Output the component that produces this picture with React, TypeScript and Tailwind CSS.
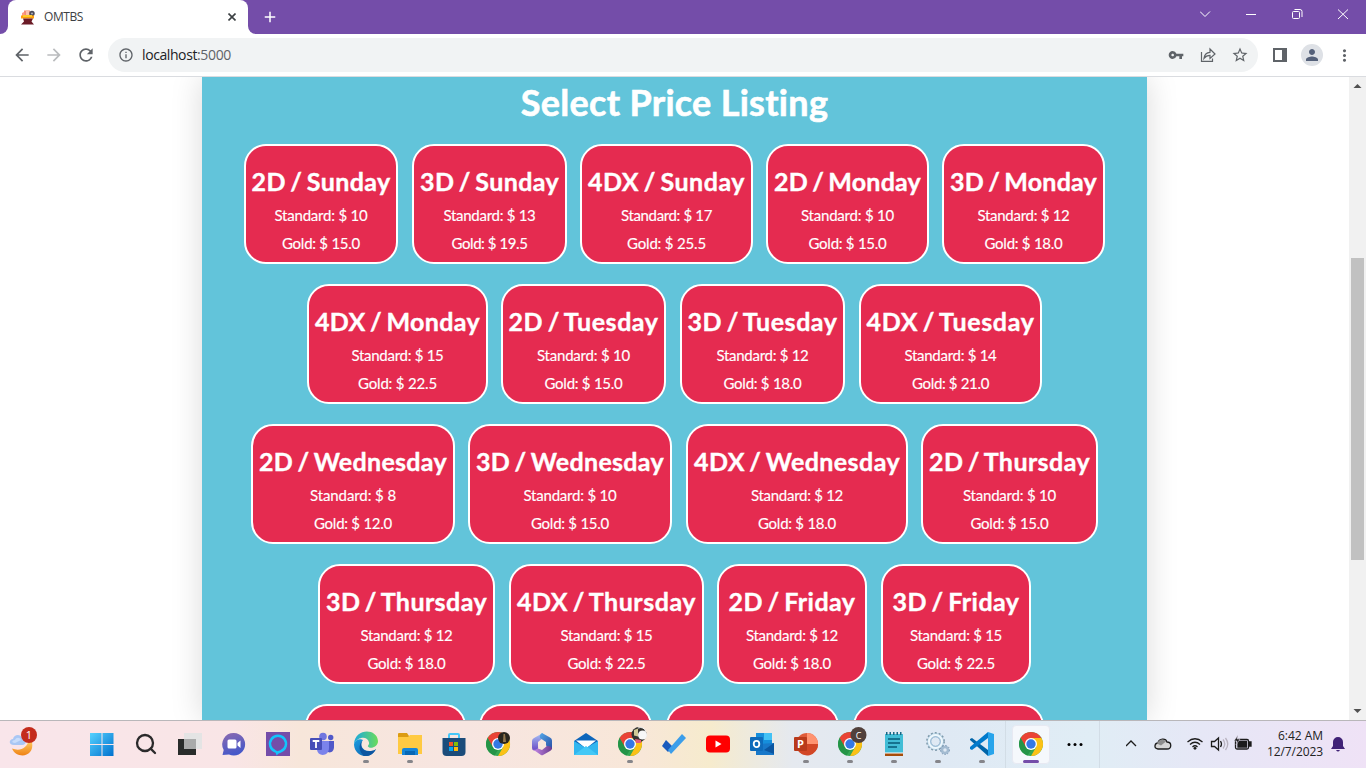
import { useLayoutEffect, useRef, type ReactNode } from "react";
import { Search } from "lucide-react";
import { MdArrowBack, MdArrowForward, MdRefresh, MdInfoOutline, MdVpnKey, MdStarBorder, MdPerson, MdMoreVert, MdAdd } from "react-icons/md";

/** Single line of text, tracked so that it fills exactly `width` pixels. */
function Fit({ children, width, className = "" }: { children: string; width: number; className?: string }) {
  const ref = useRef<HTMLSpanElement>(null);
  useLayoutEffect(() => {
    const el = ref.current!;
    const fit = () => {
      el.style.letterSpacing = "0px";
      const natural = el.getBoundingClientRect().width;
      el.style.letterSpacing = `${(width - natural) / children.length}px`;
    };
    fit();
    document.fonts?.ready.then(fit);
  }, [children, width]);
  return <span ref={ref} className={`inline-block whitespace-nowrap ${className}`}>{children}</span>;
}

type Card = { box: string; title: string; tw: number; std: string; sw: number; gold: string; gw: number };

const rows: Card[][] = [
  [
    { box: "w-[154px]", title: "2D / Sunday", tw: 139, std: "10", sw: 93, gold: "15.0", gw: 78 },
    { box: "ml-[14px] w-[155px]", title: "3D / Sunday", tw: 139, std: "13", sw: 92, gold: "19.5", gw: 76 },
    { box: "ml-[13px] w-[173px]", title: "4DX / Sunday", tw: 157, std: "17", sw: 91, gold: "25.5", gw: 79 },
    { box: "ml-[13px] w-[163px]", title: "2D / Monday", tw: 147, std: "10", sw: 93, gold: "15.0", gw: 78 },
    { box: "ml-[13px] w-[163px]", title: "3D / Monday", tw: 147, std: "12", sw: 92, gold: "18.0", gw: 78 },
  ],
  [
    { box: "w-[181px]", title: "4DX / Monday", tw: 165, std: "15", sw: 92, gold: "22.5", gw: 79 },
    { box: "ml-[13px] w-[165px]", title: "2D / Tuesday", tw: 150, std: "10", sw: 93, gold: "15.0", gw: 78 },
    { box: "ml-[14px] w-[165px]", title: "3D / Tuesday", tw: 150, std: "12", sw: 92, gold: "18.0", gw: 78 },
    { box: "ml-[14px] w-[183px]", title: "4DX / Tuesday", tw: 168, std: "14", sw: 92, gold: "21.0", gw: 77 },
  ],
  [
    { box: "w-[204px]", title: "2D / Wednesday", tw: 188, std: "8", sw: 86, gold: "12.0", gw: 78 },
    { box: "ml-[13px] w-[204px]", title: "3D / Wednesday", tw: 188, std: "10", sw: 93, gold: "15.0", gw: 78 },
    { box: "ml-[14px] w-[222px]", title: "4DX / Wednesday", tw: 206, std: "12", sw: 92, gold: "18.0", gw: 78 },
    { box: "ml-[13px] w-[177px]", title: "2D / Thursday", tw: 161, std: "10", sw: 93, gold: "15.0", gw: 78 },
  ],
  [
    { box: "w-[177px]", title: "3D / Thursday", tw: 161, std: "12", sw: 92, gold: "18.0", gw: 78 },
    { box: "ml-[14px] w-[195px]", title: "4DX / Thursday", tw: 179, std: "15", sw: 92, gold: "22.5", gw: 78 },
    { box: "ml-[13px] w-[150px]", title: "2D / Friday", tw: 127, std: "12", sw: 92, gold: "18.0", gw: 78 },
    { box: "ml-[14px] w-[150px]", title: "3D / Friday", tw: 127, std: "15", sw: 92, gold: "22.5", gw: 78 },
  ],
];

const lastRow = ["w-[161px]", "ml-[13px] w-[173px]", "ml-[14px] w-[173px]", "ml-[14px] w-[191px]"];

const cardBase = "box-border h-[120px] shrink-0 rounded-[22px] border-2 border-white bg-[#e52b50]";

function PriceCard({ card }: { card: Card }) {
  return (
    <div className={`${cardBase} flex flex-col items-center pt-[17px] ${card.box}`}>
      <h2 className="h-[38px] text-[25px] leading-[37px] font-bold [-webkit-text-stroke:0.4px_white] [word-spacing:-2px]"><Fit width={card.tw}>{card.title}</Fit></h2>
      <p className="h-[28px] text-[15px] leading-[28px] [-webkit-text-stroke:0.15px_white]"><Fit width={card.sw}>{`Standard: $ ${card.std}`}</Fit></p>
      <p className="h-[28px] text-[15px] leading-[28px] [-webkit-text-stroke:0.15px_white]"><Fit width={card.gw}>{`Gold: $ ${card.gold}`}</Fit></p>
    </div>
  );
}

function TabStrip() {
  return (
    <div className="flex h-[34px] bg-[#744da9] text-white">
      <div className="flex w-2 items-end bg-white"><div className="h-full w-2 rounded-br-lg bg-[#744da9]" /></div>
      <div className="bg-[#744da9]">
        <div className="flex h-[34px] w-[240px] items-center rounded-t-lg bg-white pl-3">
          <svg className="h-4 w-4" viewBox="0 0 16 16">
            <path d="M4 1.500h6v6H4z" fill="#f58d76" /><path d="M2 4l2-1 1 4H2z" fill="#ff9b85" />
            <circle cx="12" cy="4.500" r="2.700" fill="#4b4b58" /><circle cx="12" cy="4.500" r="1.100" fill="#a6a6b4" />
            <path d="M6 1h3v5H6z" fill="#fbc1ad" /><path d="M1 6.500h13v3H1z" fill="#ff9d0a" /><path d="M3 6h9v2H3z" fill="#ffca28" />
            <path d="M3 9.500h10l-1.500 3 2.500 3H1l3-3z" fill="#6b1b26" />
          </svg>
          <span className="ml-2 text-[12px] leading-4 text-[#3c4043]"><Fit width={39}>OMTBS</Fit></span>
          <svg className="mr-3 ml-auto h-2 w-2" viewBox="0 0 8 8"><path d="M.5.5l7 7m0-7l-7 7" stroke="#3c4043" strokeWidth="1.600" /></svg>
        </div>
      </div>
      <div className="w-2 bg-white"><div className="h-full w-2 rounded-bl-lg bg-[#744da9]" /></div>
      <MdAdd className="mt-2 ml-[5px] h-[18px] w-[18px]" />
      <svg className="ml-auto h-[34px] w-[166px]" viewBox="0 0 166 34" fill="none" stroke="#fff" strokeWidth="1">
        <path d="M0 11.500l5 5 5-5" />
        <path d="M46 14.500h10" />
        <rect x="92.500" y="11.500" width="7" height="7" rx="1" />
        <path d="M94.500 9.500h5.500a2 2 0 0 1 2 2v5.500" />
        <path d="M138 9.500l10 9.500m0-9.500l-10 9.500" />
      </svg>
    </div>
  );
}

function Toolbar() {
  return (
    <div className="flex h-[43px] items-center border-b border-[#dadce0] bg-white text-[#5f6368]">
      <MdArrowBack className="ml-3 h-5 w-5" />
      <MdArrowForward className="ml-3 h-5 w-5 text-[#babcbe]" />
      <MdRefresh className="ml-3 h-5 w-5" />
      <div className="ml-3 flex h-[34px] w-[1150px] items-center rounded-full bg-[#f1f3f4] pl-[10px]">
        <MdInfoOutline className="h-4 w-4" />
        <span className="ml-2 text-[14px] leading-5 text-[#202124]"><Fit width={55}>localhost</Fit></span>
        <span className="text-[14px] leading-5 text-[#5f6368]"><Fit width={34}>:5000</Fit></span>
        <MdVpnKey className="ml-auto h-4 w-4" />
        <svg className="ml-4 h-4 w-4" viewBox="0 0 16 16" fill="none" stroke="currentColor" strokeWidth="1.200">
          <path d="M1.500 5v9.400h11v-3" /><path d="M4 11.300c.5-4 2.700-5.800 6-6V2l5 5-5 4.500V8.300c-2.600 0-4.300.8-6 3z" />
        </svg>
        <MdStarBorder className="mr-[9px] ml-[15px] h-[18px] w-[18px]" />
      </div>
      <svg className="ml-[15px] h-[14px] w-[14px]" viewBox="0 0 14 14"><path d="M1 1h12v12H1z" fill="#fff" stroke="#5f6368" strokeWidth="2" /><path d="M9 1h4v12H9z" fill="#5f6368" /></svg>
      <div className="ml-[14px] flex h-[22px] w-[22px] items-center justify-center rounded-full bg-[#dee1e6]"><MdPerson className="h-[18px] w-[18px] text-[#55617a]" /></div>
      <MdMoreVert className="ml-[12px] h-[19px] w-[19px]" />
    </div>
  );
}

function ChromeLogo() {
  return (
    <>
      <circle cx="12" cy="12" r="12" fill="#34a853" />
      <path d="M1.600 6A12 12 0 0 1 22.400 6H12L6.800 15z" fill="#ea4335" />
      <path d="M22.400 6A12 12 0 0 1 12 24l5.200-9L12 6z" fill="#fbc116" />
      <path d="M1.600 6L6.800 15 12 18l-3.500 5.400A12 12 0 0 1 1.600 6z" fill="#249447" />
      <circle cx="12" cy="12" r="6" fill="#fff" /><circle cx="12" cy="12" r="4.700" fill="#3478e5" />
    </>
  );
}

function TaskIcon({ children, running, active }: { children: ReactNode; running?: boolean; active?: boolean }) {
  return (
    <div className={`flex h-[39px] w-[38px] shrink-0 flex-col items-center rounded ${active ? "border border-[#e7e9f2] bg-[#f5f8fc] pt-[6px]" : "pt-[6px]"}`}>
      <svg className="h-6 w-6 shrink-0 overflow-visible" viewBox="0 0 24 24">{children}</svg>
      {running && <div className="mt-1 h-[3px] w-[6px] shrink-0 rounded-full bg-[#85858a]" />}
      {active && <div className="mt-1 h-[3px] w-4 shrink-0 rounded-full bg-[#744da9]" />}
    </div>
  );
}

function Taskbar() {
  return (
    <div className="flex h-12 border-t border-[#b9b7ba] bg-[linear-gradient(90deg,#f9e5ea_0%,#f9e5e6_17%,#f7e6da_22%,#f7e5e1_34%,#f8e7d8_47%,#f6ebcd_52%,#e5e9ef_58%,#dfe9f4_69%,#e0edf5_80%,#e6e7f6_88%,#efe2f6_100%)]">
      <svg className="mt-1 ml-2 h-10 w-9" viewBox="0 0 36 40">
        <defs><linearGradient id="moon" x2="0" y2="1"><stop stopColor="#ffd36a" /><stop offset="1" stopColor="#ef8215" /></linearGradient></defs>
        <path d="M24 17C27 33 8 34 4 23.500c8 3 15 0 17-9z" fill="url(#moon)" />
        <path d="M6 20c-6 0-5-6-1-6 1-5 8-5 9-1 5 0 5 7 0 7z" fill="#a9c7f4" />
        <path d="M7 18c-4 0-3-3 0-3 1-3 5-3 6 0z" fill="#c9ddfb" />
        <circle cx="21" cy="10" r="8" fill="#c42b1c" />
        <text x="21" y="14" fill="#fff" fontSize="11" textAnchor="middle" fontFamily="Open Sans, sans-serif">1</text>
      </svg>
      <div className="mt-[5px] ml-[39px] flex gap-[6px]">
        <TaskIcon>
          <defs><linearGradient id="win" x2="1" y2="1"><stop stopColor="#55d2ff" /><stop offset="1" stopColor="#0071ce" /></linearGradient></defs>
          <path d="M0 1h11.500v11H0zM12.500 1h11v11h-11zM0 13h11.500v11H0zM12.500 13h11v11h-11z" fill="url(#win)" />
        </TaskIcon>
        <TaskIcon><Search size={24} strokeWidth={2.300} color="#2b2a2b" /></TaskIcon>
        <TaskIcon>
          <path d="M0 7h18v16H0z" fill="#292c2b" /><path d="M6 1h18v16H6z" fill="#e4e4e4" /><path d="M6 7h12v10H6z" fill="#a9aaaa" />
        </TaskIcon>
        <TaskIcon>
          <defs><linearGradient id="chat" x2=".3" y2="1"><stop stopColor="#8c6ab0" /><stop offset="1" stopColor="#4658c9" /></linearGradient></defs>
          <path d="M12 1a11.300 11.300 0 1 1-5 21.500L.5 23l1.200-5A11.400 11.400 0 0 1 12 1z" fill="url(#chat)" />
          <rect x="5.500" y="7.500" width="9" height="9" rx="1.500" fill="#fff" /><path d="M15.500 11l3-2.500v7.500l-3-2.500z" fill="#fff" />
        </TaskIcon>
        <TaskIcon>
          <path d="M0 0h24v24H0z" fill="#744da9" /><path d="M9.300 19.400a8 8 0 1 1 5.400 0c-1.300.5-2.700.7-3.600 1.700-.3-.9-.9-1.400-1.800-1.700z" fill="none" stroke="#12c5fb" strokeWidth="2.500" />
        </TaskIcon>
        <TaskIcon>
          <circle cx="13" cy="4.500" r="3.800" fill="#7176df" /><circle cx="20.700" cy="5.500" r="2.700" fill="#5059c9" />
          <path d="M16 9h8v6c0 6-6 7-8 3z" fill="#5059c9" /><path d="M7 9h12v7c0 9-12 9-12 1z" fill="#7b83eb" />
          <rect y="6" width="12" height="12" rx="1" fill="#464eb8" /><path d="M2.700 9h6.600M6 9v7" stroke="#fff" strokeWidth="1.800" />
        </TaskIcon>
        <TaskIcon running>
          <defs>
            <linearGradient id="edge" x2="1"><stop stopColor="#1ba8de" /><stop offset="1" stopColor="#6bdc5a" /></linearGradient>
            <linearGradient id="edgeb" x2="1" y2="1"><stop stopColor="#1b9de2" /><stop offset="1" stopColor="#0c59a4" /></linearGradient>
          </defs>
          <path d="M0 12C1 8 6 6 9 8c-4 4-1 12 8 11 2 0 4-1 5-2-3 7-10 8-14 6.500C3 22 0 17 0 12z" fill="url(#edgeb)" />
          <path d="M8.500 8.500C5 14 9 21 17 19c2 0 4-1 5-2-3 6-8 7.500-12 7C5 20 4 13 8.500 8.500z" fill="#0c55a0" />
          <path d="M0 12C1-4 23-4 24 9c.3 6-8 8.500-10 5.500-.5-1 1.500-1.500 1-4C14 4 4 4 0 12z" fill="url(#edge)" />
        </TaskIcon>
        <TaskIcon running>
          <path d="M0 2q0-1 1-1h8l2 3h12q1 0 1 1v8H0z" fill="#dc9c13" /><path d="M0 5h10l2-2h12v19H0z" fill="#ffca42" />
          <path d="M4 23v-5q0-2 2-2h12q2 0 2 2v5z" fill="#1685d7" /><path d="M7 19h10v4H7z" fill="#0767b5" />
        </TaskIcon>
        <TaskIcon>
          <path d="M7 7V3q0-1 1-1h8q1 0 1 1v4" fill="none" stroke="#46c7f8" strokeWidth="2" />
          <path d="M.5 6h23v14q0 4-4 4h-15q-4 0-4-4z" fill="#1b4c7b" />
          <path d="M7 10h4v4H7z" fill="#f35325" /><path d="M12 10h4v4h-4z" fill="#81bc06" /><path d="M7 15h4v4H7z" fill="#05a6f0" /><path d="M12 15h4v4h-4z" fill="#ffba08" />
        </TaskIcon>
        <TaskIcon><ChromeLogo /><circle cx="18" cy="6" r="6" fill="#29261e" /><path d="M17.500 2h1.500l1 8h-3z" fill="#90764d" /></TaskIcon>
        <TaskIcon>
          <defs>
            <linearGradient id="m1" x2="0" y2="1"><stop stopColor="#a9c6f7" /><stop offset="1" stopColor="#6a49c4" /></linearGradient>
            <linearGradient id="m2" x2="1" y2="1"><stop stopColor="#55a7e8" /><stop offset="1" stopColor="#274fa5" /></linearGradient>
            <linearGradient id="m3" x2="1"><stop stopColor="#c58ae8" /><stop offset="1" stopColor="#6a3b8f" /></linearGradient>
          </defs>
          <path d="M13 1L4 6Q2 7 2 9v7q0 2 2 2.500 5-.5 4-4V10l5-4z" fill="url(#m1)" />
          <path d="M12 1l8 4.500q2 1 2 3V17q-5 0-6-4v-3l-6-4q-1-3 2-5z" fill="url(#m2)" />
          <path d="M3 17.500q3 1 5-1l4 1.500 5-4q5 0 5 3-1 1.500-2 2l-7 4q-1 .5-2 0z" fill="url(#m3)" />
        </TaskIcon>
        <TaskIcon>
          <path d="M0 9l12-8 12 8v13H0z" fill="#0d66bb" /><path d="M2 8.500h20l-10 8z" fill="#fff" /><path d="M0 9l12 7L24 9v14H0z" fill="#30b6ef" /><path d="M0 23l12-9 12 9z" fill="#43c8f6" />
        </TaskIcon>
        <TaskIcon running>
          <ChromeLogo /><circle cx="21" cy="2.500" r="7.500" fill="#343330" /><circle cx="24.500" cy="3" r="4.500" fill="#f7f7f7" /><path d="M16-2l4-1.500v8l-4-1z" fill="#d1c995" /><path d="M17 7l6 1v3h-5z" fill="#e55a78" /><path d="M20-4q6-2 8 4" stroke="#f7f7f7" fill="none" />
        </TaskIcon>
        <TaskIcon><path d="M4 8l7 7-5 5-6-6z" fill="#195abd" /><path d="M6 18L20 2l4 4L9 22z" fill="#3b9eea" /></TaskIcon>
        <TaskIcon><rect y="3.500" width="24" height="17" rx="4" fill="#f00" /><path d="M9.500 8.500v7l6-3.500z" fill="#fff" /></TaskIcon>
        <TaskIcon>
          <path d="M6 1h16v18H6z" fill="#168fdc" /><path d="M14 1h8v7h-8z" fill="#43c2f5" /><path d="M6 12l18-1v12H6z" fill="#1878c9" /><path d="M14 18l10-7v11z" fill="#0b56a1" />
          <rect y="5" width="13" height="14" rx="1" fill="#0e6bbb" /><ellipse cx="6.500" cy="12" rx="2.800" ry="3.200" fill="none" stroke="#fff" strokeWidth="1.800" />
        </TaskIcon>
        <TaskIcon running>
          <circle cx="13" cy="12" r="11" fill="#df5b39" /><path d="M13 1a11 11 0 0 1 11 11H13z" fill="#ff9370" /><path d="M13 12h11a11 11 0 0 1-21 5z" fill="#d24726" />
          <rect y="5" width="13" height="14" rx="1" fill="#b93a1b" /><text x="6.500" y="16" fill="#fff" fontSize="11" fontWeight="700" textAnchor="middle" fontFamily="Open Sans, sans-serif">P</text>
        </TaskIcon>
        <TaskIcon running><ChromeLogo /><circle cx="20.500" cy="3" r="8" fill="#51403b" /><text x="20.500" y="6.500" textAnchor="middle" fill="#fff" fontSize="9" fontFamily="Open Sans, sans-serif">C</text></TaskIcon>
        <TaskIcon running>
          <path d="M3 2h18v20H3z" fill="#42bdd6" /><path d="M3 21h18v3H3z" fill="#a64d0b" /><path d="M3 21h18" stroke="#fff" />
          <path d="M6 7h12M6 11h12M6 15h9" stroke="#075b78" strokeWidth="1.500" /><path d="M4 1.500h17" stroke="#196783" strokeWidth="3" strokeDasharray="1.500 2" />
        </TaskIcon>
        <TaskIcon running>
          <circle cx="9.500" cy="9.500" r="6.500" fill="none" stroke="#b9d5e8" strokeWidth="4" /><circle cx="9.500" cy="9.500" r="8.700" fill="none" stroke="#809bac" strokeWidth="1.500" strokeDasharray="2 2" /><circle cx="9.500" cy="9.500" r="6.500" fill="none" stroke="#eef7fc" strokeWidth="2" /><circle cx="9.500" cy="9.500" r="4.700" fill="none" stroke="#86a9c8" strokeWidth=".8" />
          <circle cx="19" cy="18" r="3" fill="none" stroke="#a3bbd1" strokeWidth="2.500" /><circle cx="19" cy="18" r="4.500" fill="none" stroke="#7895b3" strokeWidth="1" strokeDasharray="1.500 1.500" />
        </TaskIcon>
        <TaskIcon running>
          <path d="M0 7l2-1 16 12v6L0 8z" fill="#0065a9" /><path d="M0 17l2 1L18 6V0L0 15z" fill="#007acc" /><path d="M18 0l6 2v20l-6 2z" fill="#28a4eb" />
        </TaskIcon>
      </div>
      <div className="ml-[4px] h-12 w-px bg-[#d2dde6]" />
      <div className="mt-1 ml-[6px]"><TaskIcon active><ChromeLogo /></TaskIcon></div>
      <svg className="mt-[21px] ml-[17px] h-[5px] w-4" viewBox="0 0 16 5"><circle cx="2" cy="2.500" r="1.500" /><circle cx="8" cy="2.500" r="1.500" /><circle cx="14" cy="2.500" r="1.500" /></svg>
      <div className="ml-[16px] h-12 w-px bg-[#d2dde6]" />
      <svg className="ml-[26px] h-12 w-[130px]" viewBox="0 0 130 48" fill="none" stroke="#1c1c1c" strokeWidth="1.300">
        <path d="M0 25l5-5 5 5" />
        <path d="M32 28c-5-1-3-6 0-6 1-5 8-5 9-1 5 0 5 7 0 7z" fill="#d6d6d6" /><path d="M31 22.500c2-5 7-5 9-2l-5 4z" fill="#8d8d8d" stroke="none" />
        <path d="M61.500 21q7.500-6.500 15 0M64 23.500q5-4.500 10 0M66.500 26q2.500-2.500 5 0" /><circle cx="69" cy="27.300" r="1.400" fill="#1c1c1c" stroke="none" />
        <path d="M85.500 20.500h3l4-3.500v12l-4-3.500h-3z" /><path d="M94.500 20q2 3 0 6" /><path d="M97 18.500q3.500 4.500 0 9M99.500 17q4.500 6 0 12" stroke="#b9b3c0" />
        <rect x="109.500" y="18.500" width="13" height="9.500" rx="1.500" /><path d="M112 20.500h8.500v5.500H112zM123.500 21h1.500v4h-1.500z" fill="#1c1c1c" /><path d="M112 14l-4 6h3l-1 4 4-6h-3z" fill="#1c1c1c" stroke="#ebe5f7" strokeWidth=".5" />
      </svg>
      <div className="mt-[7px] ml-[11px] flex w-[56px] flex-col items-end text-[12px] leading-4 text-[#222]">
        <Fit width={45}>6:42 AM</Fit><Fit width={56}>12/7/2023</Fit>
      </div>
      <svg className="mt-[15px] ml-[8px] h-[17px] w-[14px]" viewBox="0 0 14 17" fill="#402276"><path d="M2 6a5 5 0 0 1 10 0v4l2 3H0l2-3zM5 14h4q-2 3-4 0z" /></svg>
    </div>
  );
}

export default function App() {
  return (
    <div className="h-[768px] w-[1366px] overflow-hidden bg-white font-['Open_Sans',sans-serif]">
      <TabStrip />
      <Toolbar />
      <div className="flex h-[643px] overflow-hidden">
        <main className="flex flex-1 justify-center overflow-hidden">
          <section className="flex h-full w-[945px] flex-col bg-[#62c4da] pt-[4px] font-['Lato',sans-serif] text-white shadow-[0_0_30px_rgba(0,0,0,0.15)]">
            <h1 className="h-[43px] shrink-0 text-center text-[36px] leading-[42px] font-bold [-webkit-text-stroke:0.6px_white]"><Fit width={308}>Select Price Listing</Fit></h1>
            <div className="mt-5 flex flex-col gap-5">
              {rows.map((row, i) => <div key={i} className="flex justify-center">{row.map((card) => <PriceCard key={card.title} card={card} />)}</div>)}
              <div className="flex justify-center">{lastRow.map((box, i) => <div key={i} className={`${cardBase} ${box}`} />)}</div>
            </div>
          </section>
        </main>
        <div className="flex w-[17px] flex-col items-center bg-[#f1f1f1]">
          <svg className="h-[181px] w-[17px]" viewBox="0 0 17 181"><path d="M4.500 11l4-4 4 4z" fill="#505050" /></svg>
          <div className="h-[302px] w-[13px] bg-[#c1c1c1]" />
          <svg className="mt-auto h-[17px] w-[17px]" viewBox="0 0 17 17"><path d="M4.500 6l4 4 4-4z" fill="#505050" /></svg>
        </div>
      </div>
      <Taskbar />
    </div>
  );
}
